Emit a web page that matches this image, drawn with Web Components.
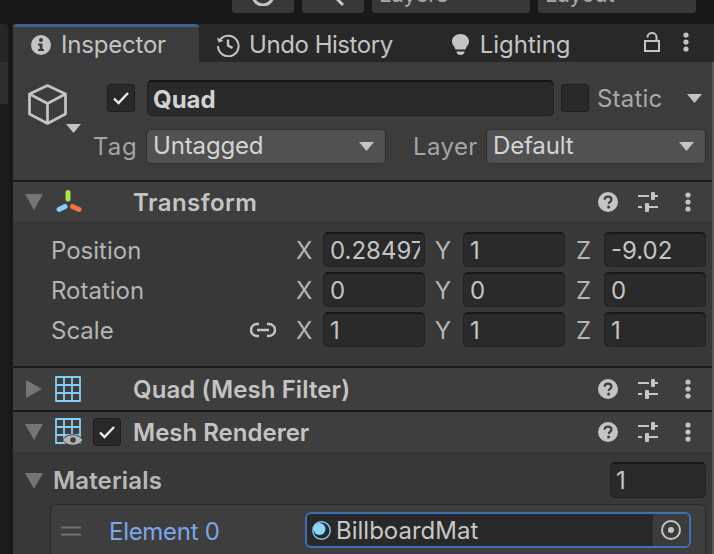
<!DOCTYPE html>
<html><head><meta charset="utf-8"><style>
html,body{margin:0;padding:0;width:714px;height:554px;overflow:hidden;background:#191919;font-family:Inter,"Liberation Sans",sans-serif;color:#c4c4c4}
#app{display:flex;flex-direction:column;width:714px;height:554px}
</style></head><body>
<u-app id="app"></u-app>
<script>
const def=(name,css,html)=>{customElements.define(name,class extends HTMLElement{connectedCallback(){if(this.shadowRoot)return;const s=this.attachShadow({mode:'open'});const a=n=>this.getAttribute(n)??'';s.innerHTML='<style>'+css+'</style>'+(typeof html==='function'?html(a):html);}})};
const TRI_D='<svg width="18" height="16" viewBox="0 0 18 16"><path d="M0 0H18L9 16Z" fill="#757575"/></svg>';
const TRI_R='<svg width="16" height="18" viewBox="0 0 16 18"><path d="M0 0L16 9L0 18Z" fill="#757575"/></svg>';
const KEBAB='<svg width="6" height="20" viewBox="0 0 6 20"><circle cx="3" cy="3" r="2.6" fill="#c4c4c4"/><circle cx="3" cy="10" r="2.6" fill="#c4c4c4"/><circle cx="3" cy="17" r="2.6" fill="#c4c4c4"/></svg>';
const HELP='<svg width="20" height="20" viewBox="0 0 20 20"><circle cx="10" cy="10" r="10" fill="#c4c4c4"/><path d="M6.6 7.8C6.7 5.8 8.1 4.700 10 4.700c2 0 3.400 1.100 3.400 2.900 0 1.300-.8 2-1.700 2.600-.8.5-1 .9-1 1.800" fill="none" stroke="#3e3e3e" stroke-width="2.200"/><circle cx="10.600" cy="15" r="1.500" fill="#3e3e3e"/></svg>';
const SLIDERS='<svg width="20" height="20" viewBox="0 0 20 20" fill="#c4c4c4"><rect x="0" y="3" width="11" height="2"/><rect x="13" y="0" width="4" height="8" rx="1"/><rect x="17" y="3" width="3" height="2"/><rect x="0" y="14" width="4" height="2"/><rect x="7" y="11" width="4" height="9" rx="1"/><rect x="11" y="14" width="9" height="2"/></svg>';
const CHECK='<svg width="18" height="14" viewBox="0 0 18 14"><path d="M2 7.500L6.500 12L16 2" fill="none" stroke="#eee" stroke-width="2.400"/></svg>';
const ARROW='<svg width="15" height="9" viewBox="0 0 15 9"><path d="M0 0H15L7.500 9Z" fill="#c4c4c4"/></svg>';
const ICONS={
 info:'<svg width="20" height="20" viewBox="0 0 20 20"><circle cx="10" cy="10" r="10" fill="#c4c4c4"/><circle cx="10" cy="5" r="2" fill="#3c3c3c"/><path d="M7 8.500h4.500V14H13v2H7v-2h1.700V10.500H7Z" fill="#3c3c3c"/></svg>',
 history:'<svg width="24" height="24" viewBox="0 0 24 24" fill="none" stroke="#c4c4c4" stroke-width="2"><path d="M3.600 7.500A10.300 10.300 0 1 1 2 13"/><path d="M1 4.500L2.500 9.500L7.500 8" stroke="none" fill="#c4c4c4"/><path d="M12 6.500V12.500L16.500 15" stroke-width="2.400"/></svg>',
 bulb:'<svg width="17" height="21" viewBox="0 0 17 21" fill="#c4c4c4"><path d="M8.500 0C3.700 0 0 3.300 0 7.500c0 3.700 2.900 4.800 3.500 8h10c.6-3.200 3.500-4.300 3.500-8C17 3.300 13.300 0 8.500 0Z"/><path d="M4.500 17.500h8C12.500 19.700 11 21 8.500 21S4.500 19.700 4.500 17.500Z"/></svg>',
 lock:'<svg width="16" height="20" viewBox="0 0 16 20" fill="none" stroke="#c4c4c4" stroke-width="2"><rect x="1" y="9" width="14" height="10"/><path d="M3.500 5.500V5a4.500 4 0 0 1 9 0V9"/></svg>'};
const GRID='<path d="M1 1H25V25H1ZM9 1V25M17 1V25M1 9H25M1 17H25" fill="none" stroke="#83cdfb" stroke-width="1.800" stroke-linejoin="round"/>';

def('u-tab',`:host{display:flex;align-items:center;gap:9px;height:38px;box-sizing:border-box;border-top:3px solid transparent;font-size:24px;color:#c4c4c4;flex:none}
:host([active]){background:#3c3c3c;border-top-color:#3d6190;border-radius:4px 4px 0 0;width:186px;padding-left:18px;gap:10px;letter-spacing:-.2px}
.i{display:flex}`,a=>`<span class="i">${ICONS[a('icon')]}</span><slot></slot>`);

def('u-check',`:host{display:flex;align-items:center;justify-content:center;width:28px;height:28px;box-sizing:border-box;background:#292929;border:1px solid #1e1e1e;border-radius:3px;flex:none}`,a=>a('on')?CHECK:'');

def('u-text',`:host{display:flex;align-items:center;height:36px;box-sizing:border-box;padding:1px 0 0 5px;background:#2a2a2a;border:1px solid #212121;border-top:2px solid #151515;border-radius:5px;font-size:24px;font-weight:700;color:#d2d2d2;flex:none}`,'<slot></slot>');

def('u-drop',`:host{display:flex;align-items:center;justify-content:space-between;height:35px;box-sizing:border-box;padding:0 11px 0 6px;background:#515151;border:1px solid #2e2e2e;border-radius:5px;font-size:24px;color:#d4d4d4;letter-spacing:-.15px;flex:none}
.x{display:block;margin-top:-2px}
svg{display:block}`,'<span class="x"><slot></slot></span>'+ARROW);

def('u-num',`:host{display:block;flex:none;height:35px;line-height:33px;box-sizing:border-box;padding:0 4px 0 6px;background:#2a2a2a;border:1px solid #212121;border-top:2px solid #171717;border-radius:5px;font-size:24px;color:#c4c4c4}
.clip{display:block;overflow:hidden;white-space:nowrap}`,'<span class="clip"><slot></slot></span>');

def('u-comp',`:host{display:flex;align-items:center;height:40px;flex:none;background:#3e3e3e;border-top:2px solid #1a1a1a;font-size:24px;font-weight:600;color:#c4c4c4}
.t{width:24px;margin-left:9px;display:flex;justify-content:center}
.ic{width:38px;margin-left:9px;display:flex}
.chk{width:40px;display:flex}
.n{flex:1;padding-top:1px}
.r{display:flex;align-items:center;margin-right:21px}
.h{margin-right:20px;display:flex}.s{margin-right:27px;display:flex}.k{display:flex}`,
a=>`<span class="t">${a('open')?TRI_D:TRI_R}</span><span class="ic"><slot name="icon"></slot></span><span class="chk"><slot name="chk"></slot></span><span class="n"><slot></slot></span><span class="r"><span class="h">${HELP}</span><span class="s">${SLIDERS}</span><span class="k">${KEBAB}</span></span>`);

def('u-vec',`:host{display:flex;align-items:center;height:35px;font-size:24px;color:#b4b4b4;flex:none}
.l{width:199px;padding-left:38px;padding-top:2px}
.link{width:46px;display:flex}
.a{padding-top:2px}`,
a=>`<span class="l">${a('label')}</span><span class="link">${a('link')?'<svg width="26" height="16" viewBox="0 0 26 16" fill="none" stroke="#c4c4c4" stroke-width="2.400"><path d="M9 2H7a6 6 0 0 0 0 12h2M17 2h2a6 6 0 0 1 0 12h-2M7 8H19"/></svg>':''}</span>
<span class="a" style="width:27px">X</span><u-num style="width:102px">${a('x')}</u-num><span class="a" style="width:36px;padding-right:2px;text-align:center">Y</span><u-num style="width:102px">${a('y')}</u-num><span class="a" style="width:37px;padding-right:2px;text-align:center">Z</span><u-num style="width:102px">${a('z')}</u-num>`);

def('u-toolbar',`:host{display:flex;height:24px;flex:none;overflow:hidden;align-items:flex-start;padding-left:232px;gap:8px;box-sizing:border-box}
.b{height:32px;margin-top:-19px;box-sizing:border-box;background:#383838;border-radius:3px;width:62px;display:flex;align-items:flex-end;justify-content:center;flex:none;overflow:hidden}
.w{width:158px;justify-content:flex-start;padding:0 0 6px 7px;font-size:22px;line-height:26px;color:#a8a8a8}`,
`<div class="b"><svg width="30" height="30" viewBox="0 0 30 30" style="margin-bottom:7px" fill="none" stroke="#c4c4c4" stroke-width="3"><circle cx="15" cy="19" r="10"/></svg></div>
<div class="b"><svg width="30" height="20" viewBox="0 0 30 20" fill="none" stroke="#c4c4c4" stroke-width="3"><path d="M19 6L25 12"/></svg></div>
<div class="b w">Layers</div><div class="b w">Layout</div>`);

def('u-app',`:host{display:flex;flex-direction:column}
.main{display:flex;flex:1;min-height:0}
.left{width:13px;flex:none;display:flex;flex-direction:column}
.left i{display:block;width:8px;flex:none}
.panel{width:699px;flex:none;background:#383838;display:flex;flex-direction:column;overflow:hidden}
.edge{width:2px;flex:none;background:linear-gradient(#2a2a2a 38px,#585858 38px)}
.tabs{display:flex;height:38px;flex:none;background:#282828;align-items:flex-end}
.tools{margin-left:auto;display:flex;align-items:center;gap:23px;height:36px;margin-right:23px;margin-bottom:2px}
.tools svg{display:block}
.head{height:118px;flex:none;background:#3c3c3c;display:flex;flex-direction:column;box-sizing:border-box;padding-top:18px}
.r1{display:flex;align-items:center;height:36px;flex:none}
.cube{width:80px;position:relative;height:36px;flex:none}
.cube .big{position:absolute;left:15px;top:4px}
.cube .dn{position:absolute;left:53px;top:44px}
.static{font-size:24px;color:#a8a8a8;margin-left:8px;width:90px;padding-top:1px;letter-spacing:.2px}
.r2{display:flex;align-items:center;height:35px;margin-top:13px;font-size:24px;color:#a4a4a4;flex:none}
.body{background:#383838;height:144px;flex:none;padding-top:9px;box-sizing:border-box;border-top:1px solid #333}
.mat{display:flex;align-items:center;height:52px;flex:none;background:#383838;border-top:1px solid #333;box-sizing:border-box;font-size:24px;font-weight:600;color:#b8b8b8;padding:3px 6px 0 12px}
.mat .t{width:18px;display:flex;margin-right:10px;margin-top:1px}
.mat .g{flex:1;letter-spacing:.15px;padding-top:1px}
.card{margin:0 6px 0 37px;height:52px;flex:none;background:#3e3e3e;border:1px solid #2c2c2c;border-bottom:none;border-radius:6px 6px 0 0;display:flex;align-items:center;box-sizing:border-box;padding-left:10px}
.drag{width:48px;display:flex}
.el{width:196px;font-size:24px;letter-spacing:-.3px;color:#7ba6e9;padding-top:1px}
.obj{width:386px;height:36px;box-sizing:border-box;border:2px solid #3f70b5;border-radius:6px;background:#292929;display:flex;align-items:center;font-size:24px;color:#c8c8c8;padding-left:5px;overflow:hidden;margin-top:-1px;flex:none}
.obj .tx{flex:1;margin-left:5px}
.obj .p{width:36px;height:36px;background:#3c3c3c;display:flex;align-items:center;justify-content:center}
`,
`<u-toolbar></u-toolbar>
<div class="main">
<div class="left"><i style="height:38px;background:#262626;border-radius:0 4px 0 0"></i><i style="height:42px;background:#2f2f2f"></i><i style="flex:1;background:#1d1d1d"></i></div>
<div class="panel">
 <div class="tabs">
  <u-tab active icon="info">Inspector</u-tab>
  <u-tab icon="history" style="margin-left:17px;letter-spacing:-.45px">Undo History</u-tab>
  <u-tab icon="bulb" style="margin-left:59px;gap:11px">Lighting</u-tab>
  <div class="tools">${ICONS.lock}${KEBAB}</div>
 </div>
 <div class="head">
  <div class="r1">
   <div class="cube"><svg class="big" width="39" height="41" viewBox="0 0 39 41" fill="none" stroke="#c4c4c4" stroke-width="2.700" stroke-linejoin="round"><path d="M19.500 1.500L37.500 10V30L19.500 39.500L1.500 30V10ZM1.500 10L19.500 19.500L37.500 10M19.500 19.500V39.500"/></svg><svg class="dn" width="15" height="9" viewBox="0 0 15 9"><path d="M0 0H15L7.500 9Z" fill="#c4c4c4"/></svg></div>
   <u-check on="1" style="margin-left:14px"></u-check>
   <u-text style="width:407px;margin-left:12px">Quad</u-text>
   <u-check style="margin-left:7px"></u-check>
   <span class="static">Static</span>
   ${ARROW}
  </div>
  <div class="r2">
   <span style="margin-left:80px;width:53px;letter-spacing:.9px">Tag</span>
   <u-drop style="width:240px">Untagged</u-drop>
   <span style="margin-left:27px;width:73px;letter-spacing:.4px">Layer</span>
   <u-drop style="width:220px">Default</u-drop>
  </div>
 </div>
 <u-comp open="1"><svg slot="icon" width="28" height="26" viewBox="0 0 28 26" fill="none" stroke-width="5" stroke-linecap="round"><path d="M13 3.500V10" stroke="#a6e84a"/><path d="M4 20.500L10 17.500" stroke="#83cdfb"/><path d="M17.500 17.500L24 20.500" stroke="#f0743e"/></svg><span style="letter-spacing:.45px">Transform</span></u-comp>
 <div class="body">
  <u-vec label="Position" x="0.28497" y="1" z="-9.02"></u-vec>
  <u-vec label="Rotation" x="0" y="0" z="0" style="margin-top:5px"></u-vec>
  <u-vec label="Scale" link="1" x="1" y="1" z="1" style="margin-top:5px"></u-vec>
 </div>
 <u-comp style="height:42px"><svg slot="icon" width="26" height="26" viewBox="0 0 26 26">${GRID}</svg><span style="letter-spacing:.1px">Quad (Mesh Filter)</span></u-comp>
 <u-comp open="1"><svg slot="icon" width="28" height="28" viewBox="0 0 28 28">${GRID}<path d="M7.500 22C12 15 23 15 28 22C23 29 12 29 7.500 22Z" fill="#b5b5b5" stroke="#3e3e3e" stroke-width="1"/><circle cx="18" cy="22" r="2.800" fill="#3e3e3e"/></svg><u-check slot="chk" on="1"></u-check>Mesh Renderer</u-comp>
 <div class="mat"><span class="t">${TRI_D}</span><span class="g">Materials</span><u-num style="width:96px;height:36px;padding:0 5px;font-weight:400;color:#c4c4c4">1</u-num></div>
 <div class="card">
  <div class="drag"><svg width="20" height="10" viewBox="0 0 20 10"><path d="M0 1.500H20M0 8.500H20" stroke="#707070" stroke-width="2"/></svg></div>
  <div class="el">Element 0</div>
  <div class="obj"><svg width="19" height="19" viewBox="0 0 19 19" style="flex:none"><circle cx="9.500" cy="9.500" r="8.700" fill="none" stroke="#83cdfb" stroke-width="1.400"/><circle cx="7.500" cy="8" r="6" fill="#8cd5ff"/></svg><span class="tx">BillboardMat</span><span class="p"><svg width="20" height="20" viewBox="0 0 20 20"><circle cx="10" cy="10" r="9" fill="none" stroke="#c4c4c4" stroke-width="2"/><circle cx="10" cy="10" r="3" fill="#c4c4c4"/></svg></span></div>
 </div>
</div>
<div class="edge"></div>
</div>`);
</script>
</body></html>
